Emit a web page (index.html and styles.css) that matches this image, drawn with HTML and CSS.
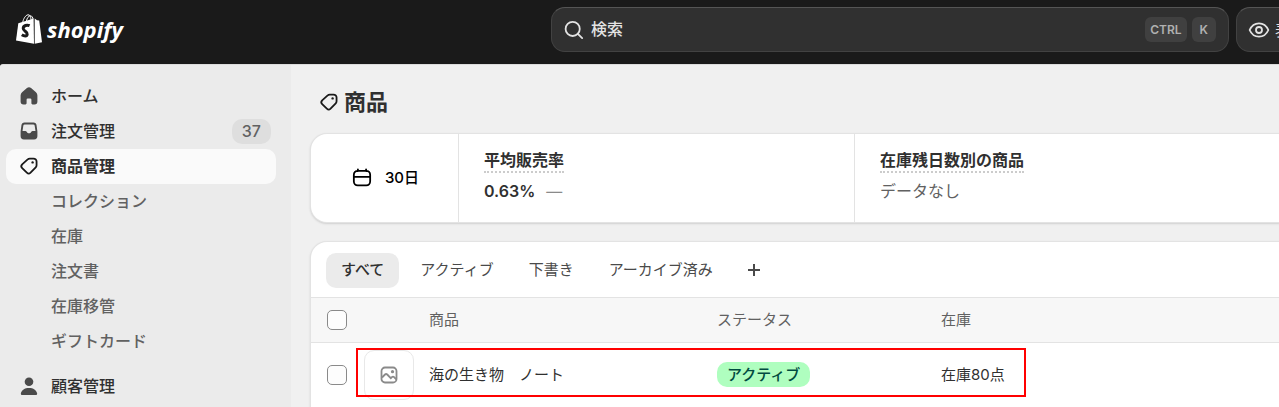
FILE: index.html
```html
<!DOCTYPE html>
<html lang="ja">
<head>
  <meta charset="UTF-8" />
  <meta name="viewport" content="width=device-width, initial-scale=1.0" />
  <title>商品 - Shopify</title>
  <link rel="stylesheet" href="styles.css">
</head>
<body>
  <header class="topbar">
    <a href="#" class="logo">
      <svg class="logo-bag" viewBox="0 0 26 30" aria-hidden="true">
        <path d="M2.3 9.2 17.6 4.6 18 29.8 0 26.4z" fill="#fff" />
        <path d="M18.7 4.4 21 6.2 23.2 6.5 26 28.2 18.7 29.8z" fill="#fff" />
        <path d="M6.8 8C7.5 4.6 9.6 1.2 12 .8c2-.2 3 2.2 3 5M10.4 7.2c.6-3.2 2.2-5.4 4-5.4 1.8.1 2.4 1.8 2.6 3.4" fill="none" stroke="#fff" stroke-width="1" />
        <path d="M13.6 11.700C11 10.500 7.400 11.400 7.200 14.400c-.1 2.800 4.400 3.100 4 5.900-.3 2.200-3 2-5.400.4" fill="none" stroke="#1a1a1a" stroke-width="3" />
      </svg>
      <span>shopify</span>
    </a>
    <label class="search">
      <svg class="icon" viewBox="0 0 20 20" aria-hidden="true">
        <path d="M13 13l3.800 3.800M14.800 9.100a5.900 5.900 0 1 1-11.800 0a5.900 5.900 0 0 1 11.800 0z" />
      </svg>
      <input type="search" placeholder="検索" aria-label="検索">
      <kbd>CTRL</kbd>
      <kbd>K</kbd>
    </label>
    <div class="actions">
      <button type="button" class="view-btn">
        <svg class="icon" viewBox="0 0 20 20" aria-hidden="true">
          <path d="M2.200 10C3.600 6.800 6.400 4.400 10 4.400s6.400 2.400 7.800 5.600C16.400 13.200 13.600 15.600 10 15.600S3.600 13.200 2.200 10z" />
          <circle cx="10" cy="10" r="2.500" />
        </svg>
        <span>表示中</span>
      </button>
    </div>
  </header>

  <div class="layout">
    <nav class="sidebar">
      <a href="#" class="nav-item">
        <svg class="icon solid" viewBox="0 0 20 20" aria-hidden="true">
          <path d="M8.300 3.400a2.600 2.600 0 0 1 3.400 0l4.100 3.500A3.400 3.400 0 0 1 17 9.500v5.100A2.400 2.400 0 0 1 14.600 17h-1.700a.9.900 0 0 1-.9-.9V13a1 1 0 0 0-1-1H9a1 1 0 0 0-1 1v3.100a.9.900 0 0 1-.9.900H5.400A2.400 2.400 0 0 1 3 14.600V9.500a3.400 3.400 0 0 1 1.200-2.600z" />
        </svg>
        <span>ホーム</span>
      </a>
      <a href="#" class="nav-item">
        <svg class="icon solid" viewBox="0 0 20 20" aria-hidden="true">
          <path fill-rule="evenodd" d="M6.300 3h7.400a2.600 2.600 0 0 1 2.600 2.200l.7 5.300v3.700a2.800 2.800 0 0 1-2.800 2.800H5.800A2.800 2.800 0 0 1 3 14.200v-3.700l.7-5.300A2.600 2.600 0 0 1 6.300 3zm.2 1.500a1.200 1.200 0 0 0-1.200 1L4.600 10h2.300c.6 0 1 .3 1.300.800l.3.500c.2.400.5.500.9.500h1.200c.4 0 .7-.1.9-.5l.3-.5c.3-.5.7-.8 1.300-.8h2.300l-.7-4.500a1.200 1.200 0 0 0-1.200-1z" />
        </svg>
        <span>注文管理</span>
        <span class="count">37</span>
      </a>
      <a href="#" class="nav-item active">
        <svg class="icon" viewBox="0 0 20 20" aria-hidden="true">
          <path d="M10.700 3.800h3.100a2.500 2.500 0 0 1 2.500 2.500v3.100a2.500 2.500 0 0 1-.7 1.700l-4.300 4.500a2.200 2.200 0 0 1-3.100 0L4.300 11.700a2.200 2.200 0 0 1 0-3.100l4.600-4.100a2.500 2.500 0 0 1 1.800-.7z" />
          <circle class="dot" cx="13" cy="7" r="1" />
        </svg>
        <span>商品管理</span>
      </a>
      <a href="#" class="nav-item sub">コレクション</a>
      <a href="#" class="nav-item sub">在庫</a>
      <a href="#" class="nav-item sub">注文書</a>
      <a href="#" class="nav-item sub">在庫移管</a>
      <a href="#" class="nav-item sub">ギフトカード</a>
      <a href="#" class="nav-item section">
        <svg class="icon solid" viewBox="0 0 20 20" aria-hidden="true">
          <circle cx="10" cy="6.500" r="3.600" />
          <path d="M3.200 16.200C3.800 13.200 6.400 11.600 10 11.600s6.200 1.600 6.800 4.600c.1.700-.3 1.300-1.100 1.300H4.300c-.8 0-1.200-.6-1.100-1.300z" />
        </svg>
        <span>顧客管理</span>
      </a>
    </nav>

    <main class="content">
      <h1 class="page-title">
        <svg class="icon" viewBox="0 0 20 20" aria-hidden="true">
          <path d="M10.700 3.800h3.100a2.500 2.500 0 0 1 2.500 2.500v3.100a2.500 2.500 0 0 1-.7 1.700l-4.300 4.500a2.200 2.200 0 0 1-3.100 0L4.300 11.700a2.200 2.200 0 0 1 0-3.100l4.600-4.100a2.500 2.500 0 0 1 1.800-.7z" />
          <circle class="dot" cx="13" cy="7" r="1" />
        </svg>
        商品
      </h1>

      <section class="card metrics">
        <button type="button" class="period">
          <svg class="icon" viewBox="0 0 20 20" aria-hidden="true">
            <path d="M6.600 2.800v1.400M13.400 2.800v1.400M6.400 4h7.200a3.200 3.200 0 0 1 3.200 3.200v5.800a3.200 3.200 0 0 1-3.200 3.200H6.400a3.200 3.200 0 0 1-3.200-3.200V7.200a3.200 3.200 0 0 1 3.200-3.200zM3.200 9.100h13.600" />
          </svg>
          <span>30日</span>
        </button>
        <div class="metric">
          <h2>平均販売率</h2>
          <p><strong>0.63%</strong><span class="dash">—</span></p>
        </div>
        <div class="metric">
          <h2>在庫残日数別の商品</h2>
          <p>データなし</p>
        </div>
      </section>

      <section class="card products">
        <div class="tabs">
          <button type="button" class="tab selected">すべて</button>
          <button type="button" class="tab">アクティブ</button>
          <button type="button" class="tab">下書き</button>
          <button type="button" class="tab">アーカイブ済み</button>
          <button type="button" class="tab add" aria-label="ビューを追加">
            <svg viewBox="0 0 12 12" aria-hidden="true"><path d="M6 0v12M0 6h12" /></svg>
          </button>
        </div>
        <div class="table-wrap">
          <table>
            <colgroup>
              <col class="col-check">
              <col class="col-thumb">
              <col class="col-name">
              <col class="col-status">
              <col>
            </colgroup>
            <thead>
              <tr>
                <th><input type="checkbox" aria-label="すべて選択"></th>
                <th></th>
                <th>商品</th>
                <th>ステータス</th>
                <th>在庫</th>
              </tr>
            </thead>
            <tbody>
              <tr>
                <td><input type="checkbox" aria-label="海の生き物 ノートを選択"></td>
                <td>
                  <span class="thumb">
                    <svg viewBox="0 0 20 20" aria-hidden="true">
                      <rect x="2.500" y="2.500" width="15" height="15" rx="3.500" />
                      <path d="M3 12.500l3-3c.7-.7 1.500-.7 2.200 0l3.600 3.700 1.100-1.100c.7-.7 1.500-.7 2.200 0l2.200 2.200" />
                      <circle class="dot" cx="13.500" cy="6.700" r="1.600" />
                    </svg>
                  </span>
                </td>
                <td>海の生き物　ノート</td>
                <td><span class="badge">アクティブ</span></td>
                <td>在庫80点</td>
              </tr>
            </tbody>
          </table>
          <div class="highlight"></div>
        </div>
      </section>
    </main>
  </div>
</body>
</html>
```
FILE: styles.css
```css
* {
  margin: 0;
  padding: 0;
  box-sizing: border-box;
}

body {
  font-family: 'Inter', 'Noto Sans CJK JP', sans-serif;
  font-size: 16px;
  line-height: 24px;
  color: #303030;
  background: #1a1a1a;
  min-height: 100vh;
  display: flex;
  flex-direction: column;
  overflow-x: hidden;
}

a {
  color: inherit;
  text-decoration: none;
}

button,
input {
  font: inherit;
  color: inherit;
}

.icon {
  width: 24px;
  height: 24px;
  flex-shrink: 0;
  fill: none;
  stroke: currentColor;
  stroke-width: 1.5;
  stroke-linecap: round;
  stroke-linejoin: round;
}

.icon.solid {
  fill: #4a4a4a;
  stroke: none;
}

.icon .dot {
  fill: currentColor;
  stroke: none;
}

/* top bar */
.topbar {
  display: flex;
  align-items: center;
  gap: 7px;
  height: 64px;
  padding: 7px 0 12px 16px;
  background: #1a1a1a;
}

.logo {
  display: flex;
  align-items: center;
  gap: 5px;
  width: 528px;
  padding-bottom: 2px;
  color: #fff;
  font-family: 'Open Sans', sans-serif;
  font-size: 22px;
  font-weight: 700;
  font-style: italic;
}

.logo-bag {
  width: 26px;
  height: 30px;
}

.search,
.view-btn {
  display: flex;
  align-items: center;
  height: 45px;
  color: #e3e3e3;
  background: #303030;
  border: 1px solid #424242;
  border-top-color: #555;
  border-radius: 14px;
}

.search {
  flex: 1;
  gap: 5px;
  padding: 0 12px 0 10px;
}

.search input {
  flex: 1;
  min-width: 0;
  padding-bottom: 2px;
  background: none;
  border: none;
  outline: none;
  font-weight: 500;
}

.search input::placeholder {
  color: #e3e3e3;
  opacity: 1;
}

kbd {
  height: 25px;
  padding: 0 5px;
  border-radius: 6px;
  background: #404040;
  color: #b0b0b0;
  font-family: 'Inter', sans-serif;
  font-size: 12px;
  font-weight: 600;
  line-height: 25px;
}

kbd:last-child {
  padding: 0 8px;
}

.actions {
  flex: 0 0 43px;
  overflow: hidden;
}

.view-btn {
  gap: 4px;
  padding: 0 10px;
  white-space: nowrap;
}

/* layout */
.layout {
  display: flex;
  flex: 1;
  background: #f0f0f0;
  border-top-left-radius: 3px;
  overflow: hidden;
  border-top: 1px solid #dcdcdc;
}

.sidebar {
  flex: 0 0 291px;
  padding: 14px 15px 3px 6px;
  background: #ebebeb;
}

.nav-item {
  display: flex;
  align-items: center;
  gap: 10px;
  height: 35px;
  padding: 0 5px 1px 11px;
  border-radius: 10px;
  font-weight: 500;
}

.nav-item.active {
  background: #fafafa;
  font-weight: 700;
}

.nav-item.active .icon,
.page-title .icon {
  color: #1a1a1a;
}

.nav-item.sub {
  padding-left: 45px;
  color: #616161;
}

.nav-item.section {
  margin-top: 10px;
}

.count {
  margin-left: auto;
  padding: 0 10px;
  border-radius: 10px;
  background: #dedede;
  color: #616161;
  line-height: 25px;
}

.content {
  flex: 1;
  min-width: 0;
  padding: 21px 0 0 20px;
}

.page-title {
  display: flex;
  align-items: center;
  gap: 3px;
  padding-left: 6px;
  margin-bottom: 16px;
  font-size: 22px;
  line-height: 32px;
}

/* cards run off the right edge of the window */
.card {
  background: #fff;
  border-radius: 16px 0 0 16px;
  box-shadow: 0 0 0 1px #e3e3e3, 0 1px 2px 1px #d0d0d0;
}

.metrics {
  display: grid;
  grid-template-columns: 147px 396px 1fr;
  height: 88px;
  margin-bottom: 20px;
}

.period {
  display: flex;
  align-items: center;
  justify-content: center;
  gap: 11px;
  background: none;
  border: none;
  color: #000;
  font-size: 15px;
  font-weight: 500;
}

.metric {
  display: flex;
  flex-direction: column;
  align-items: flex-start;
  gap: 6px;
  padding: 15px 25px;
  border-left: 1px solid #e3e3e3;
}

.metric h2 {
  border-bottom: 2px dotted #ccc;
  font-size: 16px;
  font-weight: 700;
  line-height: 22px;
}

.metric p {
  color: #616161;
}

.metric strong {
  color: #303030;
  font-weight: 600;
}

.dash {
  margin-left: 11px;
  color: #8a8a8a;
}

.products {
  border-radius: 16px 0 0 0;
  font-size: 15px;
}

.tabs {
  display: flex;
  gap: 7px;
  padding: 11px 15px 9px;
  border-bottom: 1px solid #e3e3e3;
}

.tab {
  height: 35px;
  padding: 0 14px 2px;
  border: none;
  border-radius: 10px;
  background: none;
  color: #4a4a4a;
  font-weight: 400;
}

.tab.selected {
  padding: 0 15px 2px;
  background: #ebebeb;
  color: #303030;
  font-weight: 500;
}

.tab.add svg {
  display: block;
  width: 12px;
  height: 12px;
  stroke: #4a4a4a;
  stroke-width: 2;
}

/* product table */
.table-wrap {
  position: relative;
}

table {
  width: 100%;
  table-layout: fixed;
  border-collapse: collapse;
}

.col-check {
  width: 53px;
}

.col-thumb {
  width: 65px;
}

.col-name {
  width: 288px;
}

.col-status {
  width: 224px;
}

th {
  height: 44px;
  background: #f7f7f7;
  border-bottom: 1px solid #e3e3e3;
  color: #616161;
  font-weight: 400;
  text-align: left;
}

td {
  height: 65px;
  vertical-align: middle;
}

th:first-child,
td:first-child {
  padding-left: 16px;
}

input[type="checkbox"] {
  appearance: none;
  display: block;
  width: 20px;
  height: 20px;
  border: 1px solid #8a8a8a;
  border-radius: 5px;
  background: #fdfdfd;
}

.thumb {
  display: flex;
  align-items: center;
  justify-content: center;
  width: 50px;
  height: 50px;
  border: 1px solid #e8e8e8;
  border-radius: 10px;
}

.thumb svg {
  width: 20px;
  height: 20px;
  fill: none;
  stroke: #8a8a8a;
  stroke-width: 1.8;
}

.thumb .dot {
  fill: #8a8a8a;
  stroke: none;
}

.badge {
  display: inline-block;
  padding: 0 10px;
  border-radius: 10px;
  background: #affebf;
  color: #014b40;
  font-weight: 500;
  line-height: 25px;
}

.highlight {
  position: absolute;
  top: 50px;
  left: 45px;
  width: 670px;
  height: 49px;
  border: 2px solid #f00;
  pointer-events: none;
}
```
